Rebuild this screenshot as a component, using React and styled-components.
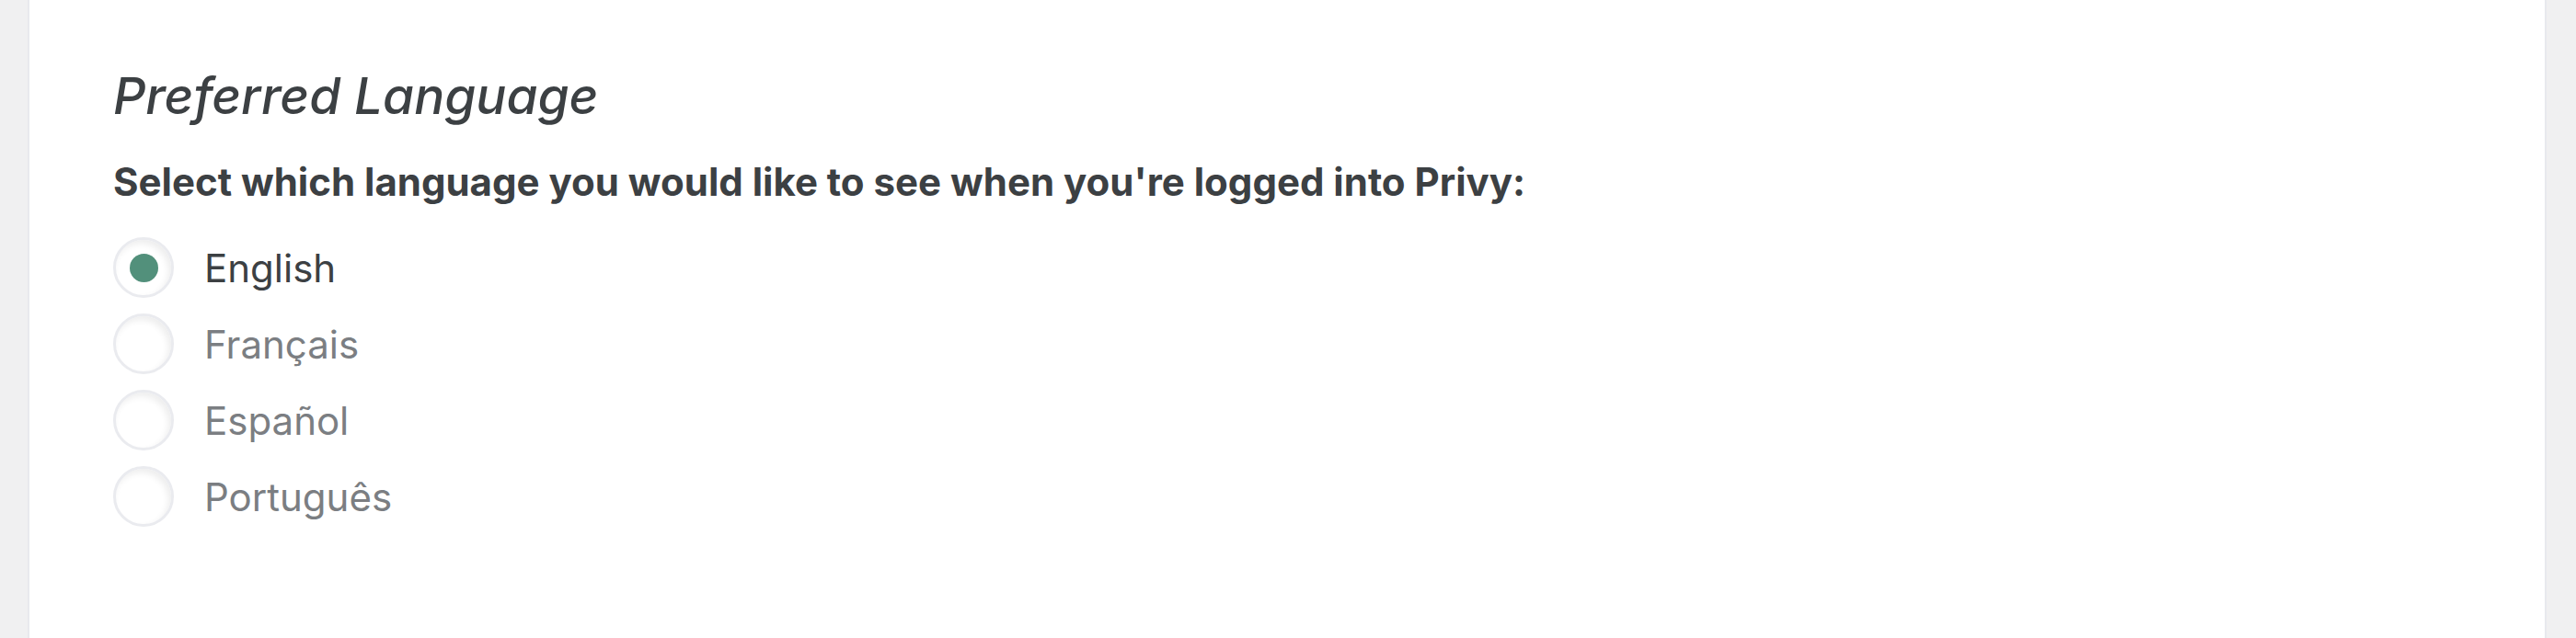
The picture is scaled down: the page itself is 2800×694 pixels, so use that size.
import React, { useState } from "react";
import styled, { createGlobalStyle } from "styled-components";

const GlobalStyle = createGlobalStyle`
  html, body {
    margin: 0;
    padding: 0;
    background: #f0f0f1;
  }
  * {
    box-sizing: border-box;
  }
`;

const Page = styled.div`
  display: flex;
  height: 694px;
  padding: 0 32px 0 30px;
  overflow: hidden;
  font-family: Inter, "Noto Sans", sans-serif;
`;

const Panel = styled.section`
  flex: 1;
  background: #ffffff;
  border-left: 2px solid #e8e9ed;
  border-right: 2px solid #e8e9ed;
  padding: 71px 0 0 91px;
`;

const Title = styled.h2`
  margin: 0;
  font-size: 55px;
  font-style: italic;
  font-weight: 500;
  line-height: 66px;
  color: #3c4043;
`;

const Prompt = styled.p`
  margin: 36px 0 0;
  font-size: 42px;
  font-weight: 700;
  line-height: 50px;
  color: #3c4043;
`;

const Options = styled.div`
  display: flex;
  flex-direction: column;
  gap: 17px;
  margin-top: 35px;
`;

const Option = styled.label`
  display: flex;
  align-items: center;
  gap: 33px;
  cursor: pointer;
  font-size: 42px;
  color: ${props => (props.checked ? "#3c4043" : "#7b7e82")};
`;

const Circle = styled.span`
  width: 66px;
  height: 66px;
  border-radius: 50%;
  background: #ffffff;
  border: 3px solid #eaebef;
  box-shadow: inset -3px 4px 7px rgba(0, 0, 0, 0.07);
  display: flex;
  align-items: center;
  justify-content: center;
  flex-shrink: 0;

  &::after {
    content: "";
    width: 31px;
    height: 31px;
    border-radius: 50%;
    background: #52907b;
    display: ${props => (props.checked ? "block" : "none")};
  }
`;

const HiddenInput = styled.input`
  display: none;
`;

const languages = ["English", "Français", "Español", "Português"];

export default function App() {
  const [selected, setSelected] = useState("English");
  return (
    <>
      <GlobalStyle />
      <Page>
        <Panel>
          <Title>Preferred Language</Title>
          <Prompt>Select which language you would like to see when you're logged into Privy:</Prompt>
          <Options>
            {languages.map(lang => (
              <Option key={lang} checked={selected === lang}>
                <HiddenInput
                  type="radio"
                  name="language"
                  checked={selected === lang}
                  onChange={() => setSelected(lang)}
                />
                <Circle checked={selected === lang} />
                {lang}
              </Option>
            ))}
          </Options>
        </Panel>
      </Page>
    </>
  );
}
